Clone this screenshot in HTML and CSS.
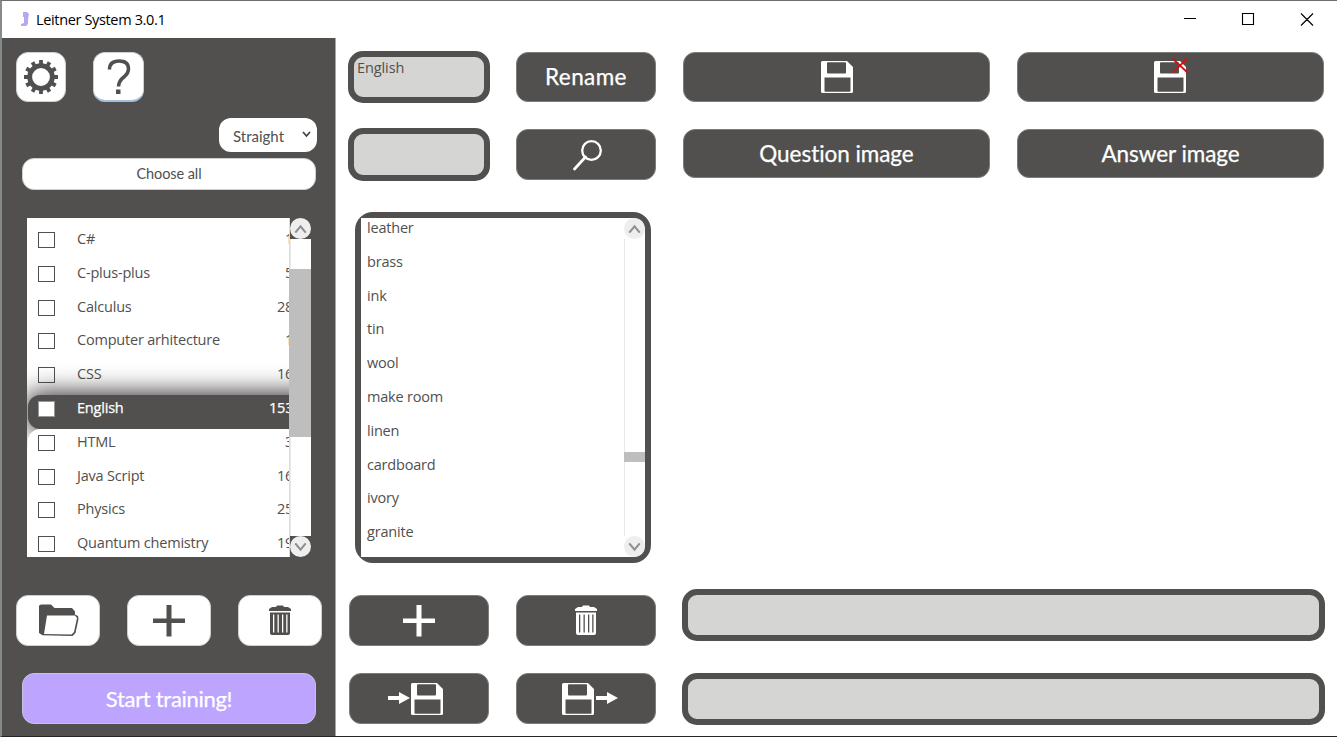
FILE: index.html
```html
<!DOCTYPE html>
<html lang="en">
<head>
<meta charset="utf-8">
<title>Leitner System 3.0.1</title>
<link rel="stylesheet" href="styles.css">
</head>
<body>
<svg class="defs" width="0" height="0">
  <symbol id="plus" viewBox="0 0 32 32"><path fill="currentColor" d="M13.500 0h5v13.500h13.500v4.500H18.500v13.500h-5V18H0v-4.500h13.500z"/></symbol>
  <symbol id="trash" viewBox="0 0 22 31"><path fill="currentColor" fill-rule="evenodd" d="M8 0.500h6l1 1.500h4l3 2v2H0V4l3-2h4zM1 7.500h20v20.500q0 2-2 2H3q-2 0-2-2zM4 9.500v18h1.300v-18zM8.500 9.500v18h1.300v-18zM13 9.500v18h1.300v-18zM17.200 9.500v18h1.300v-18z"/></symbol>
  <symbol id="disk" viewBox="0 0 32 32"><path fill="currentColor" fill-rule="evenodd" d="M1.500 0H26l6 6v24.500q0 1.500-1.500 1.500h-29Q0 32 0 30.500v-29Q0 0 1.500 0zM6 2v9.500q0 1 1 1h17q1 0 1-1V2q0-.8-1-.8H7Q6 1.200 6 2zM3.500 16.500V30q0 .8.800.800h24.400q.8 0 .8-.8V16.500z"/></symbol>
  <symbol id="arrow" viewBox="0 0 22 12"><path fill="currentColor" d="M0 4h11V0l11 6-11 6V8H0z"/></symbol>
  <symbol id="up" viewBox="0 0 20 20"><path fill="none" stroke="#8f8f8f" stroke-width="2" d="M5 14l5-6 5 6"/></symbol>
  <symbol id="down" viewBox="0 0 20 20"><path fill="none" stroke="#8f8f8f" stroke-width="2" d="M5 7l5 6 5-6"/></symbol>
</svg>
<div class="window">
  <header class="titlebar">
    <svg class="logo" width="9" height="15" viewBox="0 0 9 15"><path fill="#b9a5f2" d="M2 0h4l2 2-1 5v5l-2 2H0v-2l3-1V5H2z"/></svg>
    <span class="title">Leitner System 3.0.1</span>
    <svg class="controls" width="130" height="13" viewBox="0 0 130 13"><g fill="none" stroke="#000" stroke-width="1.100"><path d="M0 5.500h12M58.500 .5h11v11h-11zM117 .5l12 12M129 .5l-12 12"/></g></svg>
  </header>
  <div class="body">
    <aside class="sidebar">
      <div class="tools">
        <button class="btn light square" aria-label="Settings"><svg width="34" height="34" viewBox="-17 -17 34 34"><circle r="11.300" fill="none" stroke="#51504e" stroke-width="4.800"/><g stroke="#51504e" stroke-width="3.800"><path d="M0-12v-5M0 12v5M-12 0h-5M12 0h5"/><path transform="rotate(30)" d="M0-12v-5M0 12v5M-12 0h-5M12 0h5"/><path transform="rotate(60)" d="M0-12v-5M0 12v5M-12 0h-5M12 0h5"/></g></svg></button>
        <button class="btn light square help" aria-label="Help"><svg width="24" height="36" viewBox="0 0 24 36"><path d="M2.500 10.500Q2.500 2 12 2t9.500 8q0 4-4 7.500-6 4.500-6 10" fill="none" stroke="#51504e" stroke-width="3.500"/><path fill="#51504e" d="M9 30.500h4.500V35H9z"/></svg></button>
      </div>
      <div class="mode"><span>Straight</span><svg width="9" height="7" viewBox="0 0 9 7"><path d="M1 1l3.500 4L8 1" fill="none" stroke="#444" stroke-width="1.800"/></svg></div>
      <button class="btn light choose">Choose all</button>
      <div class="decks">
        <ul class="decklist">
          <li><i class="box"></i><span>C#</span><b class="one">1</b></li>
          <li><i class="box"></i><span>C-plus-plus</span><b class="one">5</b></li>
          <li><i class="box"></i><span>Calculus</span><b>28</b></li>
          <li><i class="box"></i><span>Computer arhitecture</span><b class="one">1</b></li>
          <li><i class="box"></i><span>CSS</span><b>16</b></li>
          <li class="active"><i class="box"></i><span>English</span><b>153</b></li>
          <li class="after"><i class="box"></i><span>HTML</span><b class="one">3</b></li>
          <li class="after"><i class="box"></i><span>Java Script</span><b>16</b></li>
          <li class="after"><i class="box"></i><span>Physics</span><b>25</b></li>
          <li class="after"><i class="box"></i><span>Quantum chemistry</span><b>19</b></li>
        </ul>
        <div class="scroll"><svg class="cap"><use href="#up"/></svg><div class="track"><div class="thumb"></div></div><svg class="cap"><use href="#down"/></svg></div>
      </div>
      <div class="deck-actions">
        <button class="btn light" aria-label="Open"><svg class="folder" width="42" height="33" viewBox="0 0 42 33"><path fill="#51504e" d="M1 2q0-1 2-1.500h10L16.500 4H34l3 3.500v3L40 12l.5 3-3 14-3 3-30-.8L1 29z"/><path fill="#fff" d="M9 11.500h28l2 2.500-3 14-2.500 2.500L6 30z"/></svg></button>
        <button class="btn light" aria-label="Add deck"><svg width="32" height="32"><use href="#plus"/></svg></button>
        <button class="btn light" aria-label="Delete deck"><svg width="22" height="31"><use href="#trash"/></svg></button>
      </div>
      <button class="btn start">Start training!</button>
    </aside>
    <main class="main">
      <section class="left">
        <div class="row"><div class="field">English</div><button class="btn dark rename">Rename</button></div>
        <div class="row second"><div class="field tall"></div><button class="btn dark find" aria-label="Search"><svg width="30" height="32" viewBox="0 0 30 32"><circle cx="18.500" cy="11.500" r="9.300" fill="none" stroke="#fff" stroke-width="2.300"/><path d="M12.500 18L1.500 30" stroke="#fff" stroke-width="2.700" stroke-linecap="round"/></svg></button></div>
        <div class="cards">
          <ul class="cardlist">
            <li>leather</li><li>brass</li><li>ink</li><li>tin</li><li>wool</li><li>make room</li><li>linen</li><li>cardboard</li><li>ivory</li><li>granite</li>
          </ul>
          <div class="scroll"><svg class="cap"><use href="#up"/></svg><div class="track"><div class="thumb small"></div></div><svg class="cap"><use href="#down"/></svg></div>
        </div>
        <div class="row third"><button class="btn dark" aria-label="Add card"><svg width="32" height="32"><use href="#plus"/></svg></button><button class="btn dark" aria-label="Delete card"><svg width="22" height="31"><use href="#trash"/></svg></button></div>
        <div class="row fourth"><button class="btn dark" aria-label="Import"><svg class="io" width="22" height="12"><use href="#arrow"/></svg><svg width="32" height="32"><use href="#disk"/></svg></button><button class="btn dark out" aria-label="Export"><svg width="32" height="32"><use href="#disk"/></svg><svg class="io" width="22" height="12"><use href="#arrow"/></svg></button></div>
      </section>
      <section class="right">
        <div class="pair"><button class="btn dark save" aria-label="Save"><svg width="32" height="32"><use href="#disk"/></svg></button><button class="btn dark discard" aria-label="Discard"><svg width="34" height="36" viewBox="0 0 34 36"><use href="#disk" y="3" width="32" height="32"/><path d="M18.500 .5l15 14M33.500 .5l-15 14" stroke="#d80d12" stroke-width="1.900"/></svg></button></div>
        <div class="pair images"><button class="btn dark">Question image</button><button class="btn dark">Answer image</button></div>
        <div class="space"></div>
        <div class="field wide"></div>
        <div class="field wide"></div>
      </section>
    </main>
  </div>
</div>
</body>
</html>
```
FILE: styles.css
```css
* { box-sizing: border-box; }
body { margin: 0; overflow: hidden; background: #fff; font-family: "Open Sans", "Noto Sans", sans-serif; color: #51504e; }
.defs { position: absolute; }
ul { list-style: none; margin: 0; padding: 0; }
button svg { display: block; flex: none; }
.window { width: 1337px; height: 737px; display: flex; flex-direction: column; border-top: 1px solid #6e6e6e; border-left: 2px solid #858a8a; border-bottom: 1px solid #252525; }
.titlebar { height: 37px; flex: none; display: flex; align-items: center; padding: 0 23px 0 19px; }
.logo { margin-right: 6px; }
.title { color: #000; font-size: 14.5px; letter-spacing: -.35px; }
.controls { margin-left: auto; }
.body { flex: 1; display: flex; min-height: 0; }
.sidebar { width: 334px; flex: none; background: #51504e; border-right: 1px solid #a5a5a5; padding: 14px 0 0 14px; display: flex; flex-direction: column; align-items: flex-start; }
.btn { display: flex; align-items: center; justify-content: center; padding: 0; margin: 0; border: 1px solid #777; border-radius: 12px; font-family: Lato, sans-serif; }
.light { background: #fff; color: #51504e; border-color: #cfcfcf; }
.dark { background: #51504e; color: #fff; border-color: #7c7c7b; font-size: 22.500px; letter-spacing: -.05px; -webkit-text-stroke: .25px #fff; }
.tools { display: flex; gap: 27px; }
.square { width: 50px; height: 50px; }
.help { width: 51px; border-bottom: 2px solid #a3bfdc; }
.mode { width: 98px; height: 34px; margin: 16px 0 0 203px; padding: 0 6px 0 14px; border-radius: 12px; background: #fff; display: flex; align-items: center; justify-content: space-between; font: 15px Lato, sans-serif; }
.mode span { padding-top: 1px; }
.mode svg { margin-bottom: 2px; }
.choose { width: 294px; height: 32px; margin: 6px 0 0 6px; padding-bottom: 1px; font-size: 14.500px; letter-spacing: -.1px; }
.decks { width: 284px; height: 339px; margin: 28px 0 0 11px; display: flex; }
.decklist { width: 263px; background: #fff; padding: 8px 0 0 1px; overflow: hidden; border-right: 1px solid #dcdcdc; }
.decklist li { height: 33.800px; width: 290px; padding: 0 0 6px 10px; display: flex; align-items: flex-start; position: relative; font-size: 14.500px; letter-spacing: -.2px; line-height: 25px; }
.decklist span { flex: 1; padding-left: 22px; white-space: nowrap; }
.decklist b { font-weight: 400; width: 50px; padding-left: 9px; }
.decklist .one { padding-left: 17px; }
.box { width: 17px; height: 16px; margin-top: 6px; border: 1.500px solid #51504e; background: #fff; flex: none; }
.decklist .active { z-index: 1; background: #51504e; color: #fff; border-radius: 12px; box-shadow: 0 0 24px 3px #3b3638; -webkit-text-stroke: .25px #fff; }
.active .box { border-color: #999; }
.decklist .active b { padding-left: 1px; }
.decklist .after { z-index: 2; background: #fff; }
.active + .after { border-top-left-radius: 12px; }
.scroll { width: 21px; flex: none; display: flex; flex-direction: column; }
.cap { width: 21px; height: 21px; border-radius: 50%; background: #eee; flex: none; display: block; }
.track { flex: 1; background: #fff; border-left: 1px solid #e9e9e9; padding-top: 30px; }
.thumb { height: 168px; background: #bebebe; margin-left: -1px; }
.decks .thumb { margin-left: -2px; position: relative; }
.deck-actions { display: flex; gap: 27px; margin-top: 38px; }
.deck-actions .btn { width: 84px; height: 51px; }
.folder { margin-left: 2px; }
.start { width: 294px; height: 51px; margin: 27px 0 0 6px; background: #bca4ff; border-color: #c9c2de; color: #fff; font-size: 22px; letter-spacing: -.3px; -webkit-text-stroke: .25px #fff; }
.main { flex: 1; display: flex; }
.left { width: 308px; margin: 13px 26px 0 12px; }
.right { width: 643px; padding-top: 14px; display: flex; flex-direction: column; }
.row { display: flex; align-items: center; gap: 26px; }
.left .btn { width: 140px; height: 51px; }
.left .rename { height: 50px; letter-spacing: .4px; padding-bottom: 1px; }
.find { padding-left: 3px; }
.field { width: 142px; height: 52px; border: 6px solid #51504e; border-radius: 15px; background: #d5d5d3; padding-left: 3px; font-size: 14.500px; line-height: 22px; letter-spacing: -.1px; }
.tall { height: 53px; }
.second { margin-top: 25px; }
.cards { margin: 31px 0 0 7px; width: 296px; height: 351px; border: 6px solid #51504e; border-radius: 18px; background: #fff; display: flex; }
.cardlist { flex: 1; padding-left: 6px; font-size: 14.500px; letter-spacing: -.2px; line-height: 20px; background: #fff; }
.cardlist li { height: 33.800px; }
.cards .track { padding-top: 213px; }
.small { height: 10px; }
.third, .fourth { margin-left: 1px; gap: 27px; }
.third { margin-top: 32px; }
.fourth { margin-top: 27px; }
.io { margin-bottom: 2px; }
.fourth .btn { padding-right: 8px; gap: 1px; }
.fourth .out { padding: 0 0 0 7px; gap: 2px; }
.pair { display: flex; gap: 27px; padding-left: 1px; }
.pair .btn { width: 307px; height: 50px; }
.images { margin-top: 27px; }
.images .btn { height: 49px; }
.discard { padding-bottom: 2px; }
.space { height: 411px; }
.wide { width: 643px; flex: none; }
.wide + .wide { margin-top: 32px; }
```
